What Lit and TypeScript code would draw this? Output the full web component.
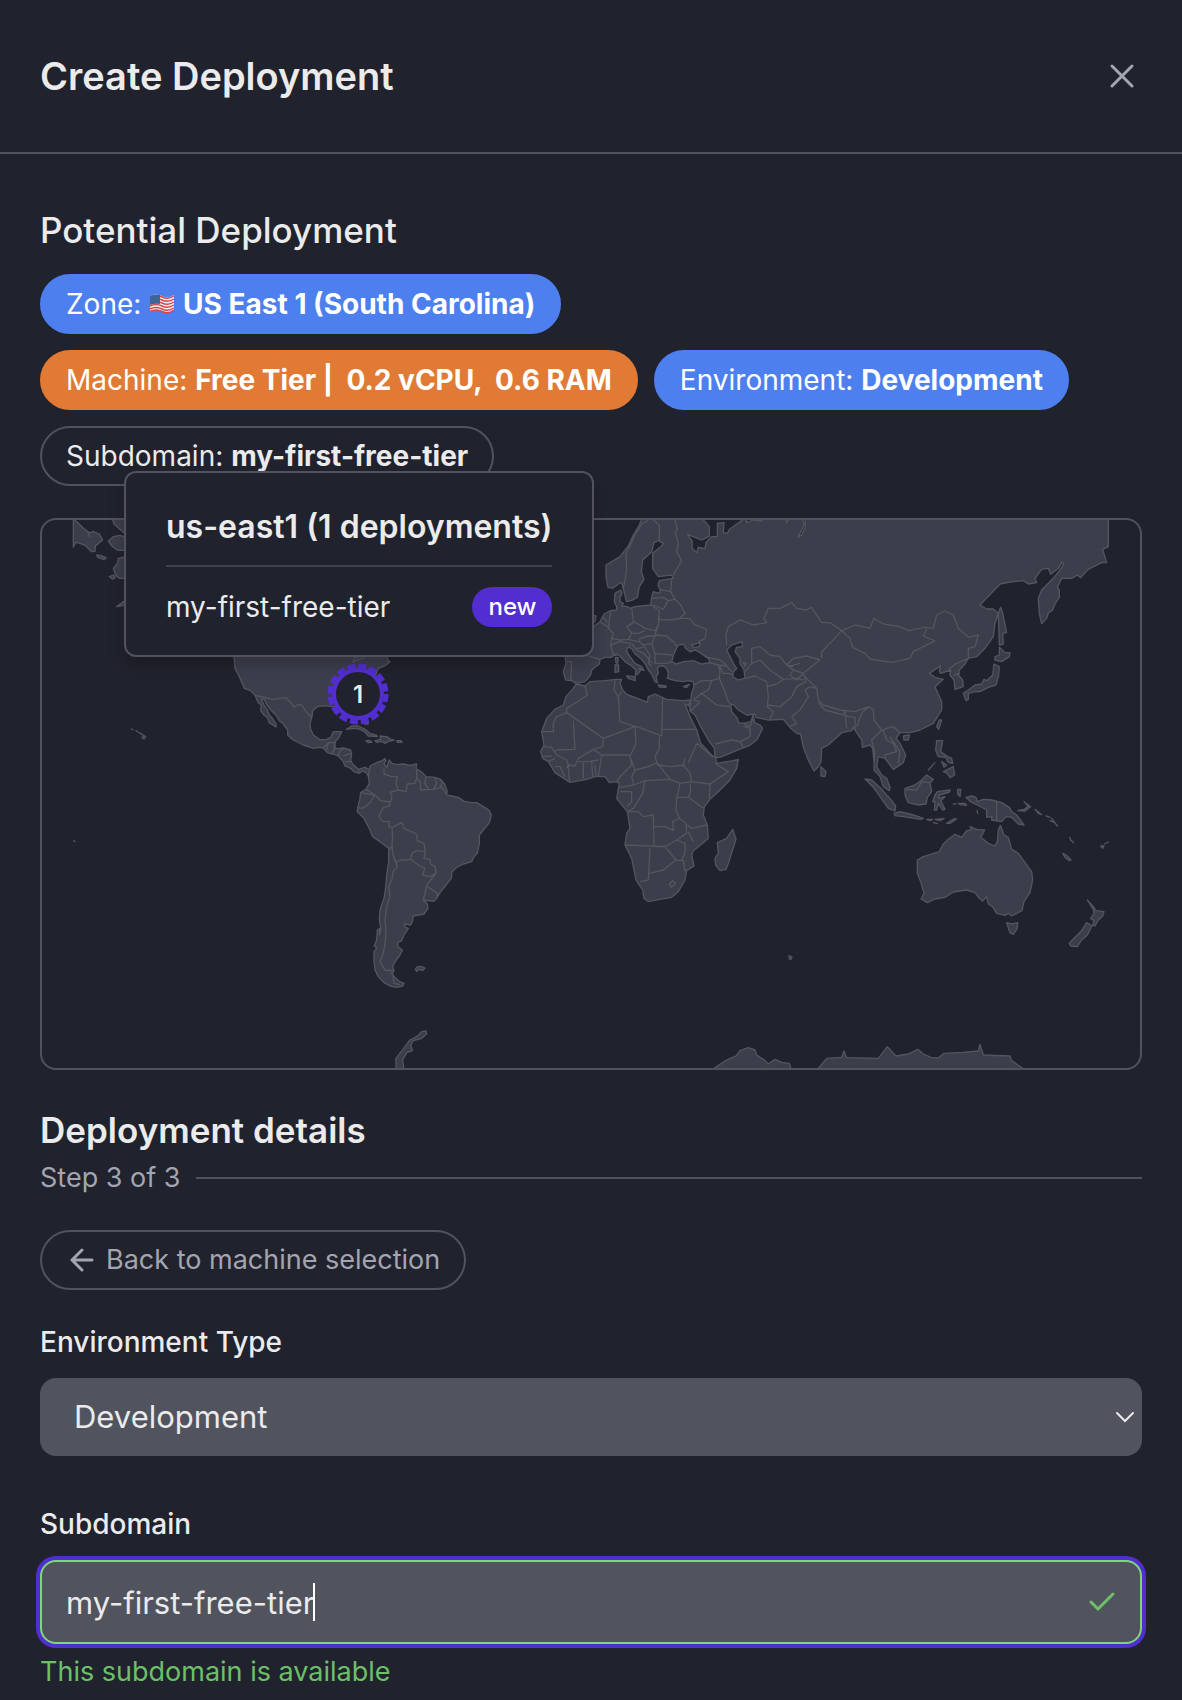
import { LitElement, html, css, svg } from "lit";
import { customElement, property, state } from "lit/decorators.js";

/* Land masses and country borders, grouped by map region (drawn at 3x). */
const NORTH_AMERICA_LAND =
  "M130,170V262L137,247 150,250 165,256 185,275 195,274 196,258 218,240 208,222 190,215 178,218 160,205 133,178ZM245,170L252,192 283,220 300,220V170ZM235,243L250,230 270,226 290,232V272L262,270 245,258ZM200,285L212,287 228,293 222,299 203,292ZM285,291L265,295 262,310 250,325 257,345 268,355H290ZM238,350L250,345 256,352 248,357ZM260,440L285,422V435Z" +
  "M610,560L612,590 615,625 628,650 643,685 662,692 675,706 685,728 694,735 692,752 702,765 712,772 718,788 738,801 738,792 727,775 718,765 712,750 702,735 694,718 703,717 708,730 722,750 738,765 748,782 758,790 773,810 773,826 790,840 820,855 850,865 868,862 880,864 892,878 915,884 925,888 940,905 945,918 962,925 972,935 988,940 998,932 1008,938 1015,948 1020,930 1005,922 985,928 968,912 962,900 965,882 962,870 940,864 925,866 912,864 915,845 925,835 935,815 910,815 903,832 885,840 868,838 850,825 842,808 840,790 846,770 848,752 862,740 885,737 905,740 940,745 975,760 1005,792 1015,792 1010,775 1000,740 1010,700 1035,650 1045,625 1065,617 1080,605 1072,600 1076,560Z" +
  "M950,808L965,798 985,798 1005,808 1020,820 1040,826 1042,830 1015,828 1005,816 985,806 965,806ZM1008,842L1018,841 1026,846 1014,848ZM1035,842L1052,838 1050,828 1070,830 1082,838 1092,840 1075,845 1065,850 1055,844 1040,847ZM1100,842H1114L1116,847H1103ZM304,807L309,809ZM318,812L324,816ZM328,818L338,824ZM340,826L347,830 342,837 336,832ZM131,1143L135,1144Z";
const NORTH_AMERICA_BORDERS =
  "M172,212L180,232M675,706L705,712 730,718 750,715 768,713 780,725 793,741 805,734 815,735 828,755 845,772M968,608L975,592 990,590M970,606L985,600 1003,593M880,864L895,848H912M895,848L890,870M915,845V864L905,884M925,888L930,872 940,866M940,888L962,880M945,905H962M985,928L988,940";
const SOUTH_AMERICA_LAND =
  "M150,378L170,368 185,363 195,356 198,362 192,372 200,382 208,360 215,370 232,374 250,372 270,376 290,372 288,386 305,396 318,410 345,412 362,418 374,432 382,456 378,464 395,468 415,472 432,484 450,487 470,488 490,500 508,512 514,525 508,548 490,570 478,585 478,610 472,640 462,650 455,665 430,672 410,682 396,695 394,715 378,735 360,758 350,775 342,784 310,780 322,792 324,805 312,822 280,828 277,845 272,855 252,852 256,862 265,865 252,885 245,902 233,908 234,920 247,930 240,945 225,965 218,980 222,993 215,1000 228,1015 238,1024 252,1030 248,1038 232,1042 215,1040 192,1028 175,1010 165,990 162,965 162,935 170,925 163,918 170,900 172,870 180,865 178,885 183,868 178,840 180,810 192,775 198,735 200,705 206,665 206,625 180,605 158,590 150,570 132,535 112,515 113,503 120,475 122,458 138,448 148,430 145,408ZM286,988L292,980 305,980 315,984 308,992 298,988 290,994Z";
const SOUTH_AMERICA_BORDERS =
  "M192,385V402L215,410 232,410 228,430 234,450 210,457 216,468 212,486M122,458L145,462 165,465 150,488 128,505 113,503M138,448L165,465 182,482 210,486 208,498 190,502 176,530 190,545 208,545 206,560 218,562M234,450L258,455 262,432 285,430 290,415 290,390M290,415L300,425 302,450 340,448 365,442 378,460M318,410L314,430 325,446M345,412L350,430 342,446M362,418L366,430 360,442M218,562L246,547 252,565 290,582 292,602 312,610 316,635 290,632 275,640 272,658 255,660 240,660 228,668 218,640 216,610 218,600 216,562M206,625L215,622M272,658L300,678 315,685 308,705 330,710 348,700 346,680 332,672 330,658 312,655 316,635M348,700L320,735 315,760 310,780M320,738L352,760 352,772M215,622L222,655 228,668 232,680 220,695 215,720 206,740 210,770 200,800 195,840 198,880 194,920 188,945 180,965 195,990 222,993M218,1000L222,1030 240,1034";
const EURASIA_LAND =
  "M368,20L358,45 340,75 325,108 300,140 258,165 258,200 264,232 278,235 295,222 305,217 312,245 320,275 338,270 352,262 358,230 372,208 364,185 368,150 395,125 402,98 415,92 430,100 425,108 398,130 398,175 415,200 455,195 460,205 440,208 418,212 414,228 422,240 418,250 400,245 395,262 392,285 365,288 345,290 330,295 322,290 305,288 310,280 300,275 300,262 306,250 302,240 285,250 283,275 290,290 290,300 272,302 252,312 240,335 218,352 190,362 133,420 138,460 130,485 137,510 155,512 168,520 195,515 212,495 215,480 238,462 240,448 255,442 272,442 290,432 300,438 315,455 335,468 348,480 346,495 352,494 362,480 358,475 372,482 365,470 345,460 330,440 320,425 322,412 335,415 345,432 365,448 378,465 385,480 395,492 405,515 412,518 408,500 415,490 412,475 420,468 430,468 440,475 445,490 442,505 465,512 490,515 505,512 520,515 522,530 515,550 512,570 510,603 525,615 545,655 565,690 583,715 585,742 600,742 665,715 690,706 712,688 728,655 720,645 704,638 700,615 692,635 670,640 655,638 652,625 635,605 632,585 640,583 655,600 680,615 705,612 708,622 745,630 790,628 812,655 830,670 842,672 850,712 865,750 882,783 895,770 903,755 905,715 925,705 965,668 995,662 1000,652 1010,668 1025,690 1027,712 1050,705 1058,715 1062,755 1062,780 1080,800 1090,830 1108,842 1110,832 1100,805 1085,795 1070,770 1075,740 1095,745 1120,778 1150,758 1157,735 1140,700 1128,685 1140,668 1170,668 1200,660 1240,640 1265,600 1265,575 1245,530 1270,508 1245,502 1228,490 1262,467 1258,482 1262,490 1292,480 1290,495 1302,510 1305,538 1330,530 1328,510 1315,495 1318,480 1335,462 1345,445 1370,440 1395,415 1420,380 1425,340 1435,310 1420,297 1400,297 1380,285 1440,222 1470,216 1510,212 1525,222 1550,218 1545,205 1565,178 1585,175 1592,193 1615,175 1625,157 1632,160 1620,180 1600,205 1565,240 1555,265 1558,310 1565,341 1580,325 1585,310 1598,300 1605,282 1618,262 1618,240 1612,232 1625,205 1655,205 1672,195 1682,203 1705,178 1745,158 1760,158 1748,118 1765,110 1765,20Z" +
  "M205,312L228,318 225,335 205,340ZM320,498L345,500 346,512 325,505ZM285,465L296,465 296,485 285,487ZM286,443L295,443 293,460 288,458ZM415,525L438,528 438,532 418,531ZM490,530L508,523 500,533ZM1150,678L1168,675 1165,690 1152,690ZM1250,650L1258,630 1265,630 1256,658ZM1435,310L1442,292 1448,310 1460,368 1448,370 1450,402 1438,405ZM1438,412L1455,428 1470,428 1468,440 1445,455 1425,450 1425,440 1438,435ZM1422,462L1438,470 1436,495 1428,525 1405,532 1380,545 1365,545 1345,550 1345,568 1338,572 1330,550 1345,540 1365,525 1385,522 1392,508 1400,512 1418,495ZM903,770L918,785 915,800 903,798ZM1250,692L1268,692 1262,725 1280,738 1275,742 1255,740 1247,720ZM1275,735L1295,745 1298,760 1285,758ZM1265,755L1280,765 1272,772ZM1270,785L1300,770 1304,795 1290,803 1282,790ZM1225,780L1245,758ZM807,1337L816,1341 813,1348 808,1347Z";
const INLAND_SEAS =
  "M545,24L568,50 568,78 545,90 503,73 517,95 516,115 530,128 535,112 555,116 558,98 575,80 592,80 592,40 612,38 610,68 622,70 628,58 660,35 675,24ZM680,38L700,30 725,32 715,24H680ZM795,24L800,38 808,24ZM848,24L852,45 835,80 845,75 856,50 855,24ZM455,455L462,430 475,405 490,402 497,415 510,425 525,420 540,428 565,445 570,458 545,462 520,452 490,455 470,462ZM515,405L540,398 538,410 520,412ZM620,420L635,405 665,395 668,410 650,412 645,425 660,445 660,460 672,480 675,505 655,510 638,500 640,485 650,475 640,460 628,435ZM670,458L680,460 674,468Z";
const EURASIA_BORDERS =
  "M385,30L365,42 345,75 330,108 318,130 320,180 315,210 310,235M400,30L418,45V92M465,30L472,55 466,70 475,100 470,125 485,152 460,195M455,210L452,245 465,268M418,238L452,245M396,265L430,262 445,272 465,268M400,285L430,298 445,272M392,285L415,300M465,268L482,285 495,310 480,325 450,330 415,328 418,300M335,295L340,335 360,345 375,355 405,362 415,345 418,320M272,305L268,330 265,355 280,370 275,385 300,390 325,388 335,370 320,350 340,338M480,325L508,325 525,345 560,358 555,385 535,395M415,345L405,375 440,378 465,400 470,410M335,370L355,370 375,362M360,385L385,378 405,378 395,400 370,405 358,395ZM395,400L405,430 455,435M405,430V460L440,460 455,455M335,400L350,420 370,430 385,445 395,460M370,405L390,435 385,460 395,468M325,388L355,395M350,415L370,412M275,385L272,405 278,430 290,438M272,405L300,395 330,400 330,412M205,438L240,448M138,455L155,455 152,510M240,335L262,350 270,345M248,320L262,338" +
  "M555,440L600,450 620,465M570,458L595,465 600,485 598,505 575,512 545,512 522,525M600,470L610,490 625,490 640,495M595,465L620,468 635,485M575,512L565,540 545,550 520,570M598,505L615,545 625,575 635,585M545,550L590,585 630,590M520,570L540,575 525,590 512,603M512,570L510,600M585,702L635,690 660,695 690,680 690,655 670,648M660,695L670,712M670,640L690,650 698,628M675,505L705,498 740,515 745,560 742,590 760,605 750,628M740,530L770,522 790,508 830,505 850,510M742,585L780,590 815,560 830,530 858,515M675,485L695,460 695,415 720,410 750,435 780,440 800,465 820,470M695,460L720,450 750,480 790,508M820,445L860,438 900,450 880,465 850,490 820,480 800,465 820,445M820,480L810,495 830,510 850,490 858,515M805,470L840,460" +
  "M620,405L618,375 625,350 660,330 700,345 740,338 732,325 745,295 780,295 815,278 830,295 858,300 875,292 905,338 930,338 965,362M965,362L930,400 905,425 905,445M965,362L1005,345 1050,355 1062,325 1090,342 1140,350 1165,362 1215,352 1240,355 1250,315 1275,303 1300,315 1315,355 1345,382 1375,375 1365,410 1345,415 1345,445M965,362L990,385 998,412 1035,430 1050,447 1115,457 1170,445 1180,425 1210,410 1245,393 1210,378 1220,357M855,500L890,535 895,570 910,585 960,600 1005,605 1045,590 1060,600 1062,630 1085,660M855,540L865,560 840,600 815,620 830,640 810,650M890,535L870,530 855,540M895,578L915,600 970,615 975,602M975,605L980,655M975,618L1005,622V660M1045,590L1025,610 1010,650M1080,665L1055,690 1065,730 1062,755M1080,665L1100,655 1120,650 1140,668M1090,662L1100,690 1120,700 1130,725 1095,735V745M1110,680L1140,725 1135,760M1285,478L1310,460 1345,445M1302,495L1320,490";
const AFRICA_LAND =
  "M168,522L195,528 210,515 255,512 290,508 305,508 300,520 308,540 320,553 345,562 382,577 385,560 405,552 440,568 490,572 512,570 506,588 495,582 510,620 530,660 542,700 575,735 588,745 590,760 640,752 655,748 650,775 630,810 590,850 570,868 553,890 550,915 562,945 565,985 548,1000 520,1022 515,1035 522,1068 500,1082 495,1110 475,1145 455,1162 420,1168 385,1175 372,1165 368,1140 348,1110 335,1045 315,1005 320,970 330,955 322,905 290,865 298,820 290,815 268,818 255,800 225,800 200,808 150,817 105,788 85,755 68,745 62,725 72,705 65,665 80,625 105,598 130,585 138,560 160,535ZM638,958L648,988 625,1060 618,1078 600,1082 587,1065 585,1045 595,1030 592,998 620,985Z";
const AFRICA_BORDERS =
  "M195,528L202,555 180,570 140,595 140,608 250,685 345,650 300,635 295,560 282,540 285,512M305,545L295,560M345,648L425,678 428,565M428,658H532M418,680V715L405,740 415,770M345,650L348,700 330,740 345,780M250,685L248,710 220,718 175,745 165,768 145,765 140,775M160,632L165,718 110,720 100,725M140,608L110,620 100,640V665H65M245,735H330M245,735L235,800M220,718L245,735M190,758V805M215,755L218,800M225,765L228,800M175,755H205L235,750M145,765L148,815M105,770H120L135,800M72,710L95,712 110,735 140,750 145,765M68,740L95,738M85,755L105,745M330,740L335,765 300,800 290,815M345,780L335,800 342,825 298,832M345,780L385,770 412,758 450,808 375,812 342,825M300,845H335V875L320,890M375,812L368,850 340,895 322,905M418,765L450,770 490,765 495,745M490,765L510,790 515,815 480,820 450,808M505,760L530,700M515,815L570,822 580,815 625,785 585,760M530,700L578,740M570,822L568,865M510,820L512,845 505,862 550,895M480,820L470,865 468,900 478,925M470,862H505M322,905H355L370,920 400,915 402,1010M402,950L435,950 460,962 458,935 478,925 498,940 500,970 470,990 440,1008 402,1010M315,1005L435,1010M500,945L515,955 560,945M505,965L520,995M390,1015L385,1110 360,1115M388,1090L430,1080 468,1050 490,1052 495,1085M435,1010L468,1050M470,990L495,1000V1030L485,1050M448,1122L458,1112 467,1120 455,1132Z";
const OCEANIA_LAND =
  "M255,265L285,255 305,240 320,225 340,238 330,250 335,275 322,292 318,312 295,315 265,308 255,285ZM135,237L155,240 185,268 212,298 227,318 225,333 205,325 180,290 160,262ZM222,340L240,335 280,345 310,355 300,358 250,350 225,347ZM320,358H338L330,362ZM345,358L372,356 360,362ZM380,370L400,357 410,357 390,370ZM340,368L352,371ZM345,285L352,275 390,270 388,276 358,285 355,295 375,290 362,302 375,328 368,330 355,310 350,330 343,330 345,305 338,305ZM413,268L422,268 420,290 413,282ZM415,310L435,310 440,316 420,314ZM400,312H408ZM471,332L473,340ZM438,292L455,288 468,292 472,305 490,298 515,300 545,308 568,322 575,335 590,345 612,375 595,372 575,352 558,350 545,365 515,360 515,350 500,352 500,330 478,318 452,305ZM593,332L615,333 632,320 612,305 625,320 612,328ZM645,328L655,340 665,344ZM678,348L690,352ZM690,362L705,368ZM695,355L712,378ZM749,412L753,422ZM755,422L760,428ZM728,460L740,466 753,480 748,482 735,472ZM842,438H852L848,445ZM853,432L866,426Z" +
  "M292,480L310,470 358,455 370,432 385,418 405,403 425,412 440,392 455,390 450,380 470,388 494,390 482,412 505,430 525,438 532,425 535,390 541,376 552,405 565,412 575,448 595,460 615,488 635,515 638,540 630,578 612,605 606,632 575,648 565,640 555,646 530,640 518,620 505,612 500,590 488,603 478,595 465,578 440,570 400,576 375,592 345,597 322,608 303,597 312,580 302,545 292,520ZM560,668L575,672 593,668 592,685 580,703 570,698ZM802,600L820,620 828,632 852,635 848,648 835,660 825,678 818,675 822,662 812,655 822,642 820,628ZM800,668L816,678 802,705 785,720 772,740 752,738 748,730 765,712 785,692Z" +
  "M-9,1110L20,1075 65,1072 72,1053 80,1073 175,1075 202,1040 228,1068 265,1062 293,1048 310,1062 335,1073 355,1074 372,1060 430,1057 475,1053 480,1033 490,1065 570,1068 575,1082 615,1110Z";
const OCEANIA_BORDERS = "M258,268L290,270 305,245 330,248M530,303V362";
const ANTARCTICA_LAND =
  "M48,270V235L75,200 90,180 110,170 125,155 138,153 140,162 125,175 100,182 92,195 98,212 80,218 68,240 72,270ZM995,270L1035,243 1050,235 1068,228 1080,212 1105,203 1125,210 1130,225 1150,238 1165,252 1185,238 1205,247 1228,250 1234,270Z";

const REGIONS = [
  { x: -12, y: -60, land: NORTH_AMERICA_LAND, seas: "", borders: NORTH_AMERICA_BORDERS },
  { x: 278, y: 120, land: SOUTH_AMERICA_LAND, seas: "", borders: SOUTH_AMERICA_BORDERS },
  { x: 478, y: -10, land: AFRICA_LAND, seas: "", borders: AFRICA_BORDERS },
  { x: 478, y: -10, land: EURASIA_LAND, seas: INLAND_SEAS, borders: EURASIA_BORDERS },
  { x: 778, y: 180, land: OCEANIA_LAND, seas: "", borders: OCEANIA_BORDERS },
  { x: 338, y: 460, land: ANTARCTICA_LAND, seas: "", borders: "" },
];

@customElement("deployment-map")
export class DeploymentMap extends LitElement {
  @property() region = "";
  @property() name = "";

  static styles = css`
    :host {
      display: block;
      position: relative;
    }
    .frame {
      border: 2px solid #50535f;
      border-radius: 16px;
      overflow: hidden;
    }
    .map {
      display: block;
      width: 100%;
      height: auto;
    }
    .land {
      fill: #3c3e4c;
      stroke: #53555f;
      stroke-width: 4;
      stroke-linejoin: round;
    }
    .sea {
      fill: #20222d;
      stroke: #53555f;
      stroke-width: 4;
    }
    .border {
      fill: none;
      stroke: #53555f;
      stroke-width: 4;
      stroke-linejoin: round;
    }
    .ring {
      fill: #20222d;
      stroke: #522dd0;
      stroke-width: 4;
    }
    .dashes {
      fill: none;
      stroke: #522dd0;
      stroke-width: 5;
      stroke-dasharray: 8 3;
    }
    .count {
      fill: #ebebeb;
      font-size: 24px;
      font-weight: 600;
      text-anchor: middle;
    }
    .tooltip {
      position: absolute;
      left: 84px;
      top: -47px;
      box-sizing: border-box;
      min-width: 468px;
      padding: 34px 40px 28px;
      border: 2px solid #50535f;
      border-radius: 12px;
      background: #20222d;
      box-shadow: 0 8px 16px rgba(0, 0, 0, 0.2);
    }
    .heading {
      margin: 0;
      padding-bottom: 18px;
      border-bottom: 2px solid #3d4250;
      font-size: 32px;
      line-height: 40px;
      font-weight: 600;
      white-space: nowrap;
    }
    .entry {
      display: flex;
      align-items: center;
      justify-content: space-between;
      margin-top: 20px;
      font-size: 28px;
      line-height: 40px;
    }
    .badge {
      padding: 0 16px;
      border-radius: 20px;
      background: #522dd0;
      color: #fff;
      font-size: 24px;
      font-weight: 500;
    }
  `;

  render() {
    return html`
      <div class="frame">
        <svg class="map" viewBox="0 0 1098 548" role="img" aria-label="World map">
          ${REGIONS.map(
            (r) => svg`<g transform="translate(${r.x} ${r.y}) scale(0.33333)">
              <path class="land" d=${r.land}></path>
              <path class="sea" d=${r.seas}></path>
              <path class="border" d=${r.borders}></path>
            </g>`
          )}
          <circle class="dashes" cx="316" cy="174" r="28"></circle>
          <circle class="ring" cx="316" cy="174" r="24"></circle>
          <text class="count" x="316" y="183">1</text>
        </svg>
      </div>
      <div class="tooltip" role="tooltip">
        <h3 class="heading">${this.region} (1 deployments)</h3>
        <div class="entry">
          <span>${this.name}</span>
          <span class="badge">new</span>
        </div>
      </div>
    `;
  }
}

@customElement("app-root")
export class AppRoot extends LitElement {
  @state() private subdomain = "my-first-free-tier";
  @state() private environment = "Development";

  static styles = css`
    :host {
      display: block;
      min-height: 100vh;
      background: #20222d;
      color: #ebebeb;
      font-family: Inter, "Liberation Sans", sans-serif;
      font-size: 28px;
      line-height: 40px;
    }
    .header {
      display: flex;
      align-items: center;
      justify-content: space-between;
      padding: 48px 40px;
      border-bottom: 2px solid #50535f;
    }
    .title {
      margin: 0;
      font-size: 38px;
      line-height: 56px;
      font-weight: 600;
    }
    .close {
      display: flex;
      padding: 4px;
      border: 0;
      background: none;
      color: #a3a5b1;
    }
    .body {
      padding: 56px 40px 0;
    }
    .section {
      margin: 0;
      font-size: 35px;
      line-height: 40px;
      font-weight: 500;
    }
    .strong {
      font-weight: 600;
    }
    .chips {
      display: flex;
      flex-wrap: wrap;
      gap: 16px;
      margin: 24px 0 32px;
    }
    .chip {
      box-sizing: border-box;
      height: 60px;
      padding: 8px 24px;
      border: 2px solid transparent;
      border-radius: 30px;
      color: #fff;
      white-space: pre;
    }
    .chip b {
      font-weight: 700;
    }
    .blue {
      background: #4d80ee;
      border-color: #4d80ee;
    }
    .orange {
      background: #e07a35;
      border-color: #e07a35;
    }
    .plain {
      border-color: #50535f;
      color: #ebebeb;
    }
    .flag {
      width: 26px;
      height: 20px;
    }
    .details {
      margin-top: 40px;
    }
    .step {
      display: flex;
      align-items: center;
      gap: 16px;
      margin-top: 8px;
      color: #a3a5b1;
      font-size: 27px;
    }
    .rule {
      flex: 1;
      height: 2px;
      background: #50535f;
    }
    .back {
      display: flex;
      align-items: center;
      gap: 8px;
      height: 60px;
      margin-top: 32px;
      padding: 0 24px;
      border: 2px solid #50535f;
      border-radius: 30px;
      background: none;
      color: #a3a5b1;
      font: inherit;
      font-size: 27px;
    }
    .label {
      display: block;
      margin: 32px 0 16px;
      font-weight: 500;
    }
    .field {
      position: relative;
      display: flex;
      align-items: center;
    }
    .select,
    .input {
      box-sizing: border-box;
      width: 100%;
      border: 0;
      border-radius: 16px;
      background: #51545f;
      color: #ebebeb;
      font: inherit;
      font-size: 31px;
      outline: none;
      appearance: none;
    }
    .select {
      height: 78px;
      padding: 0 64px 0 34px;
    }
    .input {
      height: 84px;
      padding: 0 80px 0 24px;
      border: 2px solid #7ed67c;
      box-shadow: 0 0 0 4px #522dd0;
      caret-color: transparent;
    }
    .second {
      margin-top: 48px;
    }
    .chevron {
      position: absolute;
      right: 8px;
      pointer-events: none;
    }
    .check {
      position: absolute;
      right: 26px;
      pointer-events: none;
    }
    .caret {
      position: absolute;
      left: 273px;
      width: 2px;
      height: 38px;
      background: #fff;
    }
    .hint {
      margin: 8px 0 0;
      color: #6cc068;
      font-size: 27px;
    }
  `;

  render() {
    return html`
      <header class="header">
        <h1 class="title">Create Deployment</h1>
        <button class="close" aria-label="Close">
          <svg width="32" height="32" viewBox="0 0 32 32" fill="none" stroke="currentColor" stroke-width="3" stroke-linecap="round">
            <path d="M6 6 26 26M26 6 6 26"></path>
          </svg>
        </button>
      </header>
      <main class="body">
        <h2 class="section">Potential Deployment</h2>
        <div class="chips">
          <span class="chip blue">Zone: <svg class="flag" viewBox="0 0 26 20">
              <path fill="#f1eef0" d="M1 2Q7-1 13 2T25 1V16Q19 20 13 17T1 18Z"></path>
              <path fill="none" stroke="#d5484a" stroke-width="1.4" d="M1 3Q7 0 13 3T25 2M1 6Q7 3 13 6T25 5M1 9Q7 6 13 9T25 8M1 12Q7 9 13 12T25 11M1 15Q7 12 13 15T25 14M1 17.500Q7 14.500 13 17.500T25 16"></path>
              <path fill="#3f6498" d="M1 2Q6 0 11 1V10Q6 9 1 11Z"></path>
            </svg> <b>US East 1 (South Carolina)</b></span>
          <span class="chip orange">Machine: <b>Free Tier |  0.2 vCPU,  0.6 RAM</b></span>
          <span class="chip blue">Environment: <b>${this.environment}</b></span>
          <span class="chip plain">Subdomain: <b>${this.subdomain}</b></span>
        </div>
        <deployment-map region="us-east1" .name=${this.subdomain}></deployment-map>
        <h2 class="section strong details">Deployment details</h2>
        <div class="step"><span>Step 3 of 3</span><span class="rule"></span></div>
        <button class="back">
          <svg width="32" height="32" viewBox="0 0 32 32" fill="none" stroke="currentColor" stroke-width="3" stroke-linecap="round" stroke-linejoin="round">
            <path d="M26 16H6M16 6 6 16 16 26"></path>
          </svg>
          <span>Back to machine selection</span>
        </button>
        <label class="label" for="environment">Environment Type</label>
        <div class="field">
          <select
            class="select"
            id="environment"
            @change=${(e: Event) => (this.environment = (e.target as HTMLSelectElement).value)}
          >
            <option>Development</option>
            <option>Production</option>
          </select>
          <svg class="chevron" width="18" height="12" viewBox="0 0 18 12" fill="none" stroke="#ebebeb" stroke-width="2" stroke-linecap="round">
            <path d="M1 2 9 10 17 2"></path>
          </svg>
        </div>
        <label class="label second" for="subdomain">Subdomain</label>
        <div class="field">
          <input
            class="input"
            id="subdomain"
            aria-describedby="hint"
            .value=${this.subdomain}
            @input=${(e: Event) => (this.subdomain = (e.target as HTMLInputElement).value)}
          />
          <span class="caret"></span>
          <svg class="check" width="28" height="20" viewBox="0 0 28 20" fill="none" stroke="#6cc068" stroke-width="3" stroke-linecap="round" stroke-linejoin="round">
            <path d="M3 10 10 17 25 2"></path>
          </svg>
        </div>
        <p class="hint" id="hint">This subdomain is available</p>
      </main>
    `;
  }
}
